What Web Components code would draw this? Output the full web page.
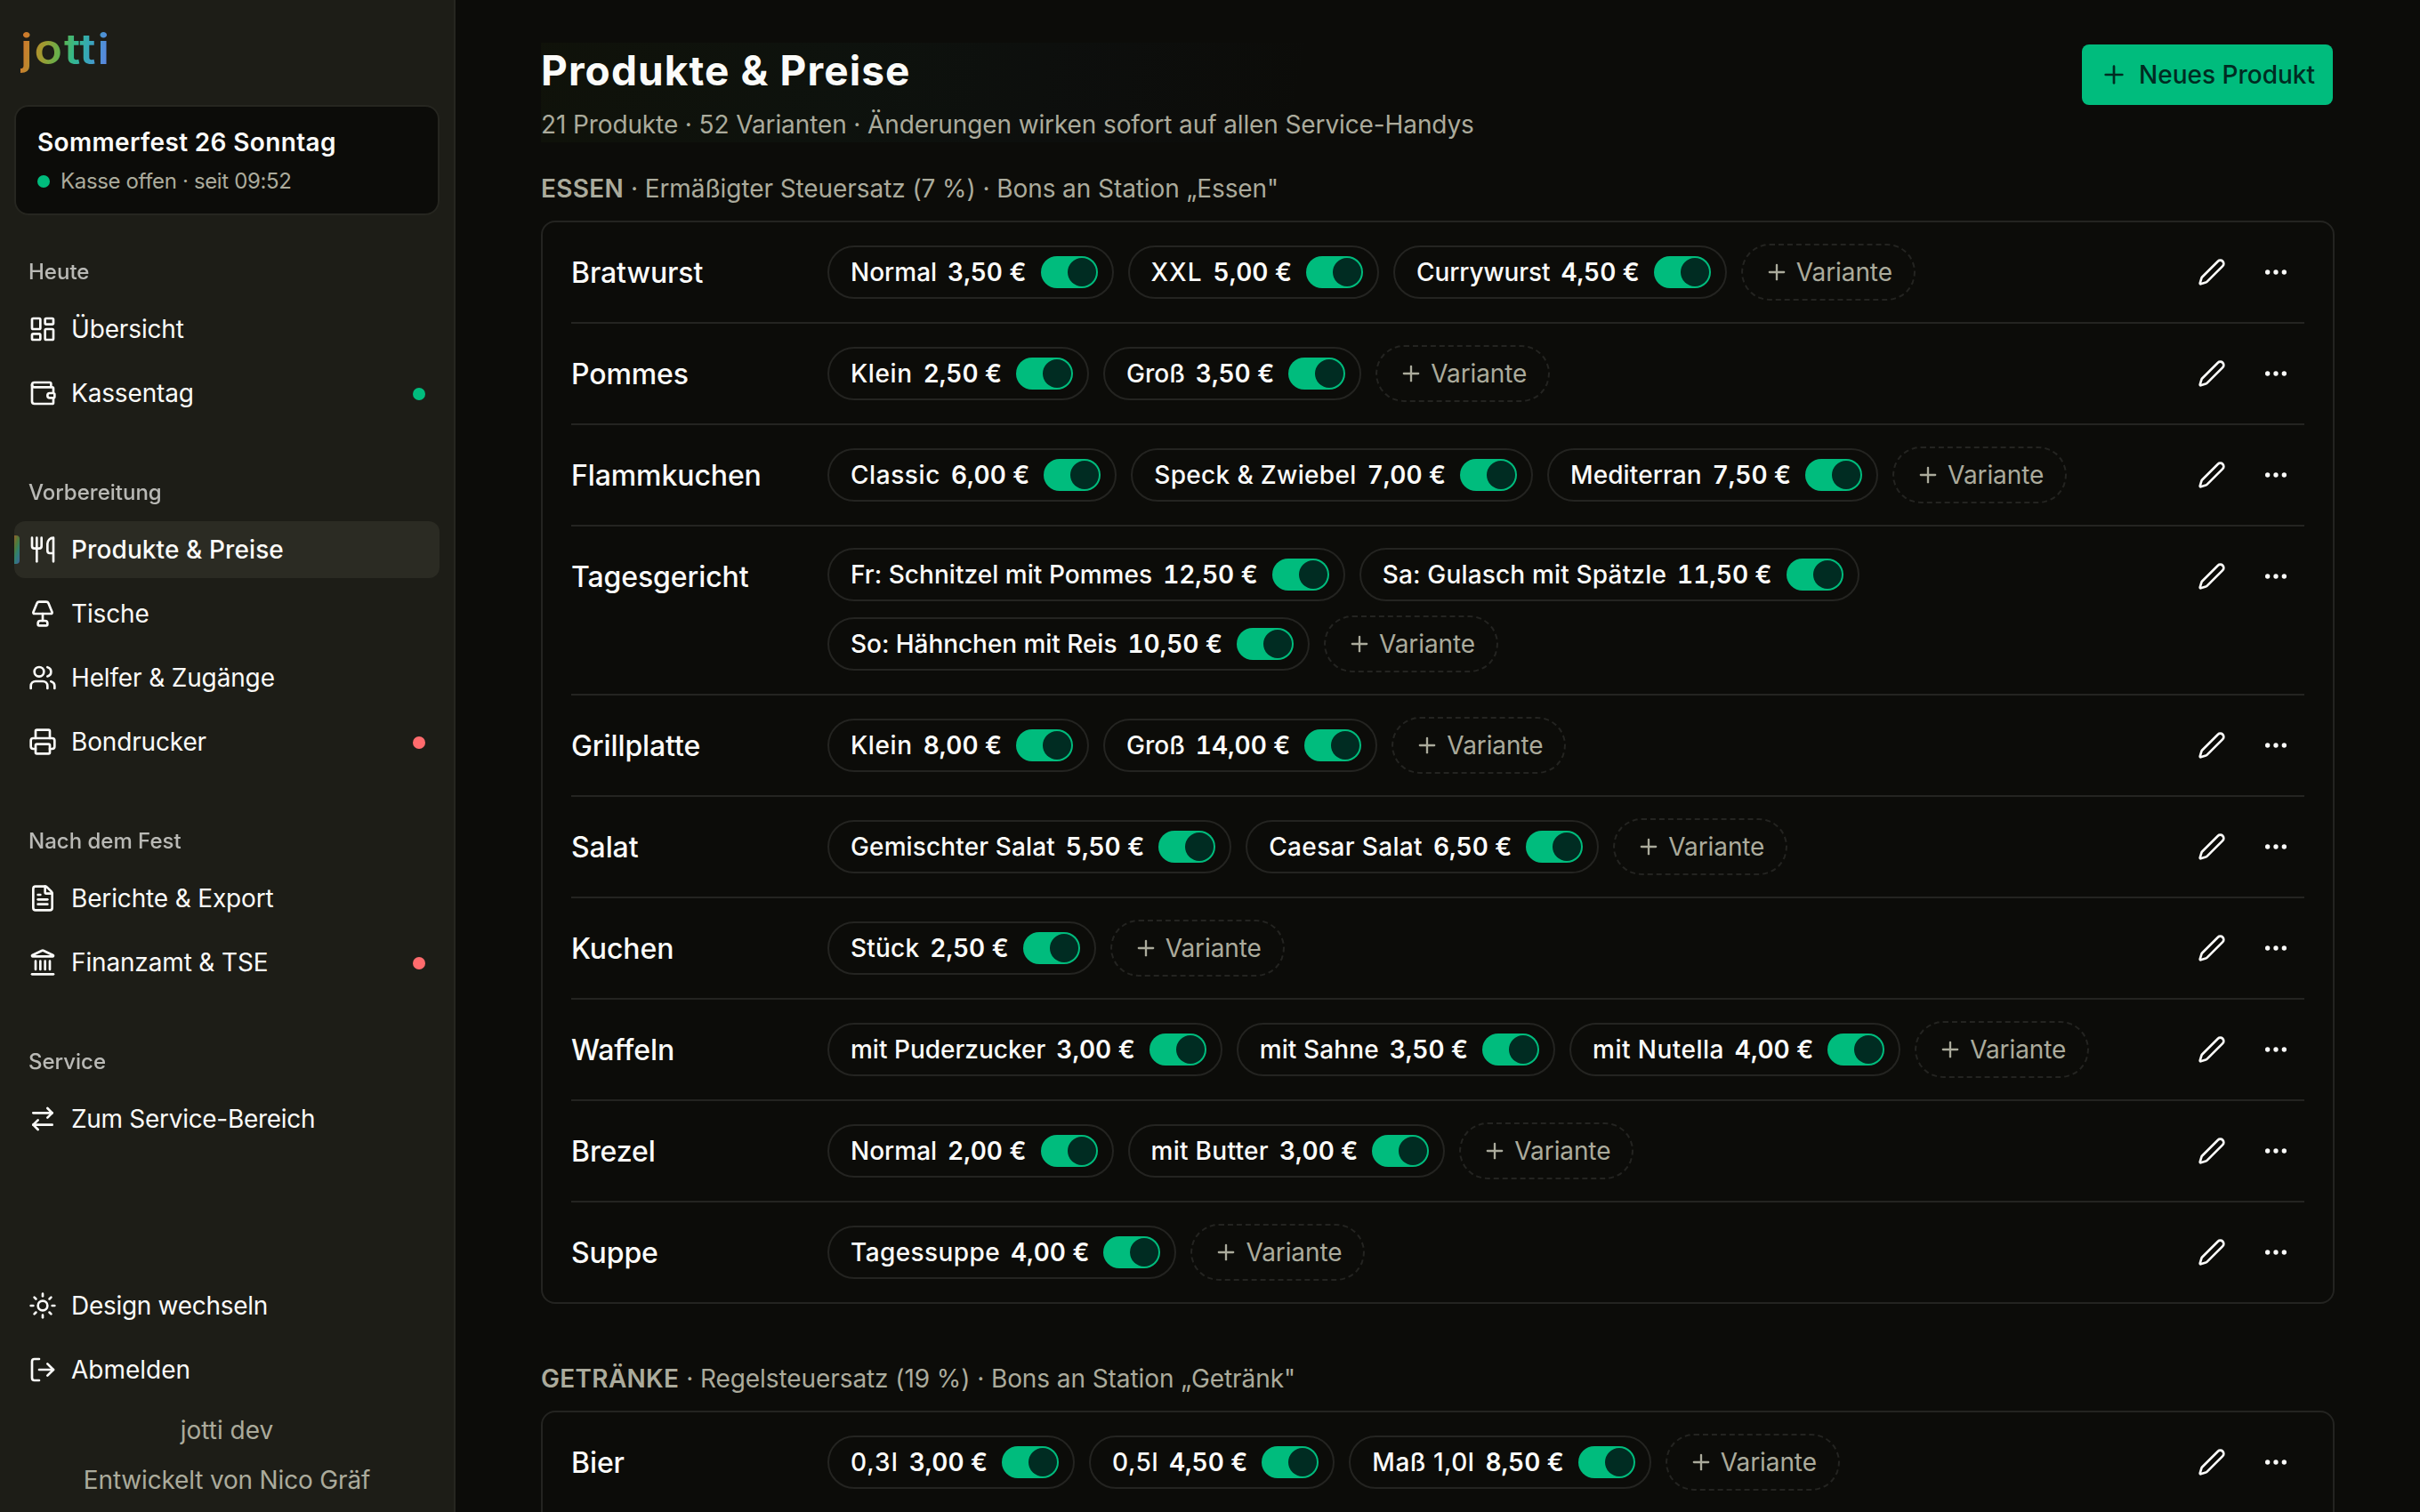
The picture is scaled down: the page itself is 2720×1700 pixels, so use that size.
<!DOCTYPE html>
<html lang="de">
<head>
<meta charset="utf-8">
<title>jotti – Produkte &amp; Preise</title>
<style>
:root {
    --bg:#0c0c09;
    --side:#1d1d17;
    --accent:#2b2b23;
    --fg:#fbfbf9;
    --muted:#abab9c;
    --line:#242421;
    --green:#00bc7d;
    --green-dark:#002c22;
    --red:#ff6b6d;
}
html, body {
    margin:0;height:1700px;overflow:hidden;
    background:var(--bg);color:var(--fg);
    font:400 28px/40px Inter,"Liberation Sans",sans-serif;
}
</style>
</head>
<body>
<jotti-app>
    <side-bar slot="side">
        <fest-card slot="top" name="Sommerfest 26 Sonntag" status="Kasse offen · seit 09:52"></fest-card>
        <nav-group label="Heute">
            <nav-item icon="dashboard">Übersicht</nav-item>
            <nav-item icon="wallet" dot="green">Kassentag</nav-item>
        </nav-group>
        <nav-group label="Vorbereitung">
            <nav-item icon="utensils" active>Produkte &amp; Preise</nav-item>
            <nav-item icon="lamp">Tische</nav-item>
            <nav-item icon="users">Helfer &amp; Zugänge</nav-item>
            <nav-item icon="printer" dot="red">Bondrucker</nav-item>
        </nav-group>
        <nav-group label="Nach dem Fest">
            <nav-item icon="file">Berichte &amp; Export</nav-item>
            <nav-item icon="landmark" dot="red">Finanzamt &amp; TSE</nav-item>
        </nav-group>
        <nav-group label="Service">
            <nav-item icon="swap" style="letter-spacing:-.3px">Zum Service-Bereich</nav-item>
        </nav-group>
        <nav-item slot="foot" icon="sun" style="letter-spacing:-.3px">Design wechseln</nav-item>
        <nav-item slot="foot" icon="logout" style="letter-spacing:0">Abmelden</nav-item>
        <span slot="credits">jotti dev</span>
        <span slot="credits" style="letter-spacing:-.17px">Entwickelt von Nico Gräf</span>
    </side-bar>
    <page-head>
        Produkte &amp; Preise
        <span slot="sub">21 Produkte · 52 Varianten · Änderungen wirken sofort auf allen Service-Handys</span>
        <primary-button slot="action">Neues Produkt</primary-button>
    </page-head>
    <!-- variants: name|price|extra label width in px -->
    <product-group label="Essen" info="Ermäßigter Steuersatz (7 %) · Bons an Station „Essen&quot;">
        <product-row name="Bratwurst" variants="Normal|3,50;XXL|5,00|3;Currywurst|4,50|-1"></product-row>
        <product-row name="Pommes" variants="Klein|2,50|3;Groß|3,50"></product-row>
        <product-row name="Flammkuchen" variants="Classic|6,00|4;Speck &amp; Zwiebel|7,00|5;Mediterran|7,50|1"></product-row>
        <product-row name="Tagesgericht" variants="Fr: Schnitzel mit Pommes|12,50|1;Sa: Gulasch mit Spätzle|11,50|4;So: Hähnchen mit Reis|10,50|-1"></product-row>
        <product-row name="Grillplatte" variants="Klein|8,00|3;Groß|14,00"></product-row>
        <product-row name="Salat" variants="Gemischter Salat|5,50|2;Caesar Salat|6,50|4"></product-row>
        <product-row name="Kuchen" variants="Stück|2,50|1"></product-row>
        <product-row name="Waffeln" variants="mit Puderzucker|3,00;mit Sahne|3,50|1;mit Nutella|4,00|5"></product-row>
        <product-row name="Brezel" variants="Normal|2,00;mit Butter|3,00|3"></product-row>
        <product-row name="Suppe" variants="Tagessuppe|4,00|4"></product-row>
    </product-group>
    <product-group label="Getränke" info="Regelsteuersatz (19 %) · Bons an Station „Getränk&quot;">
        <product-row name="Bier" variants="0,3l|3,00|4;0,5l|4,50|2;Maß 1,0l|8,50|4"></product-row>
        <product-row></product-row>
    </product-group>
</jotti-app>

<script>
// 24x24 outline icons
const ICONS = {
    dashboard: '<rect width="7" height="9" x="3" y="3" rx="1"/><rect width="7" height="5" x="14" y="3" rx="1"/><rect width="7" height="9" x="14" y="12" rx="1"/><rect width="7" height="5" x="3" y="16" rx="1"/>',
    wallet: '<path d="M19 7V4a1 1 0 0 0-1-1H5a2 2 0 0 0 0 4h15a1 1 0 0 1 1 1v4h-3a2 2 0 0 0 0 4h3a1 1 0 0 0 1-1v-2a1 1 0 0 0-1-1"/><path d="M3 5v14a2 2 0 0 0 2 2h15a1 1 0 0 0 1-1v-4"/>',
    utensils: '<path d="M3 2v7c0 1.1.9 2 2 2h4a2 2 0 0 0 2-2V2"/><path d="M7 2v20"/><path d="M21 15V2a5 5 0 0 0-5 5v6c0 1.1.9 2 2 2h3Zm0 0v7"/>',
    lamp: '<path d="M12 12v6"/><path d="M4.077 10.615A1 1 0 0 0 5 12h14a1 1 0 0 0 .923-1.385l-3.077-7.384A2 2 0 0 0 15 2H9a2 2 0 0 0-1.846 1.23Z"/><path d="M8 20a2 2 0 0 1 2-2h4a2 2 0 0 1 2 2v1a1 1 0 0 1-1 1H9a1 1 0 0 1-1-1z"/>',
    users: '<path d="M16 21v-2a4 4 0 0 0-4-4H6a4 4 0 0 0-4 4v2"/><path d="M16 3.128a4 4 0 0 1 0 7.744"/><path d="M22 21v-2a4 4 0 0 0-3-3.87"/><circle cx="9" cy="7" r="4"/>',
    printer: '<path d="M6 18H4a2 2 0 0 1-2-2v-5a2 2 0 0 1 2-2h16a2 2 0 0 1 2 2v5a2 2 0 0 1-2 2h-2"/><path d="M6 9V3a1 1 0 0 1 1-1h10a1 1 0 0 1 1 1v6"/><rect x="6" y="14" width="12" height="8" rx="1"/>',
    file: '<path d="M6 22a2 2 0 0 1-2-2V4a2 2 0 0 1 2-2h8a2.4 2.4 0 0 1 1.704.706l3.588 3.588A2.4 2.4 0 0 1 20 8v12a2 2 0 0 1-2 2z"/><path d="M14 2v5a1 1 0 0 0 1 1h5"/><path d="M10 9H8"/><path d="M16 13H8"/><path d="M16 17H8"/>',
    landmark: '<path d="M10 18v-7"/><path d="M11.12 2.198a2 2 0 0 1 1.76.006l7.866 3.847c.476.233.31.949-.22.949H3.474c-.53 0-.695-.716-.22-.949z"/><path d="M14 18v-7"/><path d="M18 18v-7"/><path d="M3 22h18"/><path d="M6 18v-7"/>',
    swap: '<path d="m16 3 4 4-4 4"/><path d="M20 7H4"/><path d="m8 21-4-4 4-4"/><path d="M4 17h16"/>',
    sun: '<circle cx="12" cy="12" r="4"/><path d="M12 2v2"/><path d="M12 20v2"/><path d="m4.93 4.93 1.41 1.41"/><path d="m17.66 17.66 1.41 1.41"/><path d="M2 12h2"/><path d="M20 12h2"/><path d="m6.34 17.66-1.41 1.41"/><path d="m19.07 4.93-1.41 1.41"/>',
    logout: '<path d="m16 17 5-5-5-5"/><path d="M21 12H9"/><path d="M9 21H5a2 2 0 0 1-2-2V5a2 2 0 0 1 2-2h4"/>',
    plus: '<path d="M5 12h14"/><path d="M12 5v14"/>',
    pencil: '<path d="M21.174 6.812a1 1 0 0 0-3.986-3.987L3.842 16.174a2 2 0 0 0-.5.83l-1.321 4.352a.5.5 0 0 0 .623.622l4.353-1.32a2 2 0 0 0 .83-.497z"/>',
    more: '<circle cx="12" cy="12" r="1"/><circle cx="19" cy="12" r="1"/><circle cx="5" cy="12" r="1"/>',
};

class Base extends HTMLElement {
    connectedCallback() {
        this.attachShadow({ mode: 'open' }).innerHTML = this.render();
    }
    attr(name) {
        return (this.getAttribute(name) || '').replace(/&/g, '&amp;');
    }
}

customElements.define('line-icon', class extends Base {
    render() {
        return `
        <style>
        :host { display:block;flex:none;width:var(--size,32px);height:var(--size,32px); }
        svg { display:block;width:100%;height:100%; }
        </style>
        <svg viewBox="0 0 24 24" fill="none" stroke="currentColor" stroke-width="2" stroke-linecap="round" stroke-linejoin="round">${ICONS[this.getAttribute('name')]}</svg>`;
    }
});

customElements.define('jotti-app', class extends Base {
    render() {
        return `
        <style>
        :host { display:grid;grid-template-columns:512px 1fr;height:1700px;overflow:hidden; }
        main { display:flex;flex-direction:column;padding:48px 96px 0;min-width:0; }
        </style>
        <slot name="side"></slot>
        <main><slot></slot></main>`;
    }
});

customElements.define('side-bar', class extends Base {
    render() {
        return `
        <style>
        :host {
            display:flex;flex-direction:column;box-sizing:border-box;
            height:1700px;padding:16px;
            background:var(--side);border-right:2px solid #262620;
        }
        .logo {
            height:86px;margin:0 0 16px 7px;width:92px;
            font-size:47px;font-weight:600;line-height:78px;letter-spacing:1.8px;white-space:nowrap;
            transform:scaleX(1.1);transform-origin:left;
            background:linear-gradient(100deg,#d07a2c 8%,#a09a30 28%,#5cb450 46%,#34b78c 58%,#35a9b4 70%,#4f8fd8 84%,#6b7ce4);
            -webkit-background-clip:text;background-clip:text;color:transparent;
        }
        .logo b { font-weight:inherit;letter-spacing:-.8px; }
        nav { display:flex;flex-direction:column;gap:48px;margin-top:32px; }
        .foot { display:flex;flex-direction:column;gap:8px;margin-top:auto; }
        .credits { display:flex;flex-direction:column;align-items:center;gap:16px;padding-top:16px;color:var(--muted); }
        </style>
        <div class="logo">jo<b>t</b>ti</div>
        <slot name="top"></slot>
        <nav><slot></slot></nav>
        <div class="foot"><slot name="foot"></slot></div>
        <div class="credits"><slot name="credits"></slot></div>`;
    }
});

customElements.define('fest-card', class extends Base {
    render() {
        return `
        <style>
        :host {
            display:flex;flex-direction:column;box-sizing:border-box;
            height:124px;padding:20px 24px;
            background:var(--bg);border:2px solid #262620;border-radius:16px;
        }
        strong { font-weight:600;letter-spacing:.35px; }
        div { display:flex;align-items:center;gap:12px;font-size:24px;line-height:40px;letter-spacing:-.35px;color:var(--muted);padding-top:4px; }
        i { width:14px;height:14px;border-radius:50%;background:var(--green); }
        </style>
        <strong>${this.attr('name')}</strong>
        <div><i></i><span>${this.attr('status')}</span></div>`;
    }
});

customElements.define('nav-group', class extends Base {
    render() {
        return `
        <style>
        :host { display:flex;flex-direction:column; }
        h3 { margin:0;padding-left:16px;font-size:24px;font-weight:500;line-height:64px;opacity:.7; }
        div { display:flex;flex-direction:column;gap:8px; }
        </style>
        <h3>${this.attr('label')}</h3>
        <div><slot></slot></div>`;
    }
});

customElements.define('nav-item', class extends Base {
    render() {
        const dot = this.getAttribute('dot');
        return `
        <style>
        :host { position:relative;display:flex;align-items:center;gap:16px;height:64px;padding:0 16px;border-radius:12px;letter-spacing:-.15px; }
        :host([active]) { background:var(--accent);font-weight:500;letter-spacing:.1px; }
        :host([active])::before {
            content:'';position:absolute;left:0;top:16px;width:6px;height:32px;border-radius:0 4px 4px 0;
            background:linear-gradient(110deg,#94602b,#4c7c3c 35%,#2f8070 60%,#40639c);
        }
        span { flex:1; }
        i { width:14px;height:14px;border-radius:50%;margin-top:2px;background:var(--${dot}); }
        </style>
        <line-icon name="${this.getAttribute('icon')}"></line-icon>
        <span><slot></slot></span>
        ${dot ? '<i></i>' : ''}`;
    }
});

customElements.define('page-head', class extends Base {
    render() {
        return `
        <style>
        :host {
            display:flex;justify-content:space-between;align-items:flex-start;height:112px;margin-bottom:32px;
            background:linear-gradient(100deg,rgba(70,110,20,.06),rgba(40,120,90,.055) 18%,rgba(40,90,130,.03) 30%,transparent 43%);
        }
        h1 { margin:0 0 10px;font-size:46px;line-height:62px;font-weight:650;letter-spacing:1.1px; }
        p { margin:0;color:var(--muted);letter-spacing:-.115px; }
        </style>
        <div>
            <h1><slot></slot></h1>
            <p><slot name="sub"></slot></p>
        </div>
        <slot name="action"></slot>`;
    }
});

customElements.define('primary-button', class extends Base {
    render() {
        return `
        <style>
        :host {
            display:flex;align-items:center;gap:12px;box-sizing:border-box;height:72px;padding:0 20px;
            border:2px solid transparent;border-radius:10px;
            background:var(--green);background-clip:padding-box;color:var(--green-dark);font-weight:500;
        }
        </style>
        <line-icon name="plus"></line-icon>
        <slot></slot>`;
    }
});

customElements.define('product-group', class extends Base {
    render() {
        return `
        <style>
        :host { display:block;flex:none;margin-bottom:64px; }
        h2 { margin:0 0 16px;font:inherit;color:var(--muted);letter-spacing:-.08px; }
        b { font-weight:600;text-transform:uppercase;letter-spacing:.3px; }
        div { border:2px solid var(--line);border-radius:16px;padding:0 32px; }
        ::slotted(:not(:last-child)) { border-bottom:2px solid var(--line); }
        </style>
        <h2><b>${this.attr('label')}</b> · ${this.attr('info')}</h2>
        <div><slot></slot></div>`;
    }
});

customElements.define('product-row', class extends Base {
    render() {
        if (!this.hasAttribute('name'))
            return '<style>:host { display:block;height:112px; }</style>';
        const chips = this.getAttribute('variants').split(';').map(v => {
            const [name, price, extra = 0] = v.split('|');
            return `<variant-chip price="${price} €" style="--track:${extra / name.length}px">${name.replace('&', '&amp;')}</variant-chip>`;
        }).join('');
        return `
        <style>
        :host { display:grid;grid-template-columns:256px 1fr auto;gap:32px;padding:24px 0; }
        .name { height:64px;font-size:32px;line-height:66px;font-weight:500;letter-spacing:-.1px; }
        .chips { display:flex;flex-wrap:wrap;align-items:center;gap:16px;max-width:1460px; }
        .actions { display:flex;gap:8px;height:64px; }
        .actions span { display:grid;place-items:center;width:64px; }
        </style>
        <div class="name">${this.attr('name')}</div>
        <div class="chips">${chips}<add-variant>Variante</add-variant></div>
        <div class="actions">
            <span><line-icon name="pencil"></line-icon></span>
            <span><line-icon name="more"></line-icon></span>
        </div>`;
    }
});

customElements.define('variant-chip', class extends Base {
    render() {
        return `
        <style>
        :host {
            display:flex;align-items:center;box-sizing:border-box;height:60px;padding:0 16px 0 24px;
            border:2px solid var(--line);border-radius:30px;font-weight:500;white-space:nowrap;
        }
        span { letter-spacing:var(--track); }
        b { margin:0 16px 0 12px;font-weight:600;font-variant-numeric:tabular-nums; }
        </style>
        <span><slot></slot></span><b>${this.attr('price')}</b><toggle-switch></toggle-switch>`;
    }
});

customElements.define('toggle-switch', class extends Base {
    render() {
        return `
        <style>
        :host { display:flex;justify-content:flex-end;box-sizing:border-box;width:64px;height:36px;padding:2px;border-radius:18px;background:var(--green); }
        i { width:32px;height:32px;border-radius:50%;background:var(--green-dark); }
        </style>
        <i></i>`;
    }
});

customElements.define('add-variant', class extends Base {
    render() {
        return `
        <style>
        :host {
            --size:28px;
            display:flex;align-items:center;gap:8px;box-sizing:border-box;height:64px;padding:0 24px;
            border:2px dashed var(--line);border-radius:32px;color:var(--muted);letter-spacing:-.1px;
        }
        </style>
        <line-icon name="plus"></line-icon>
        <slot></slot>`;
    }
});
</script>
</body>
</html>
